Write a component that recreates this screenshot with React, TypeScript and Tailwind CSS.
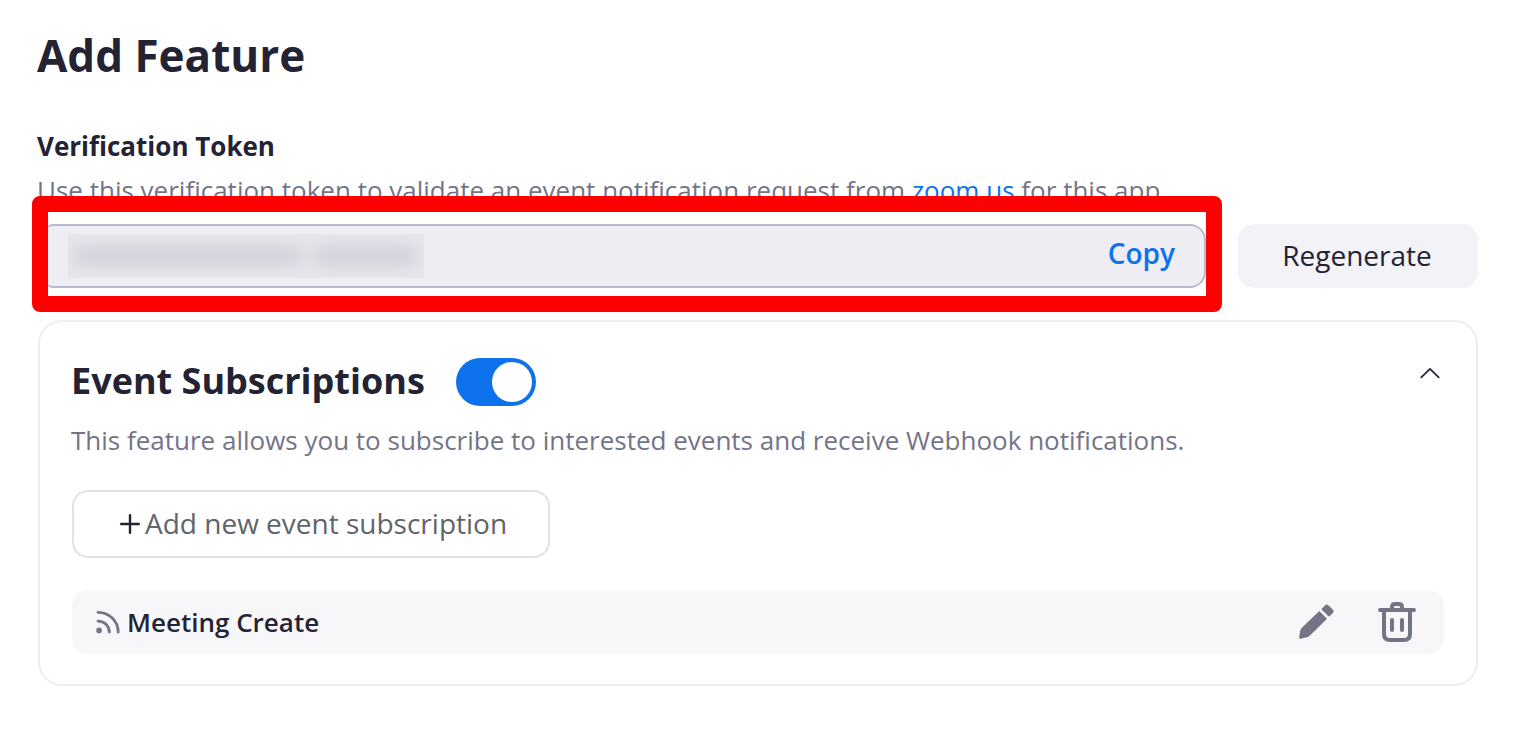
function PlusIcon() {
  return (
    <svg className="h-5 w-5 shrink-0" viewBox="0 0 20 20" fill="none" stroke="#232333" strokeWidth="2.4" strokeLinecap="round">
      <path d="M10 1.200v17.600M1.200 10h17.600" />
    </svg>
  );
}

function FeedIcon() {
  return (
    <svg className="h-6 w-6 shrink-0" viewBox="0 0 24 24" fill="none" stroke="#747487" strokeWidth="2.8" strokeLinecap="round">
      <path d="M2 2.300c11 0 20.200 8.900 20.200 19.700M2 11.100c6.400 0 11.300 4.700 11.300 10.900" />
      <circle cx="3.100" cy="20.400" r="2.800" fill="#747487" stroke="none" />
    </svg>
  );
}

function PencilIcon() {
  return (
    <svg className="h-9 w-9" viewBox="0 0 36 36" fill="#747487">
      <path d="M20.500 7.700q.8-.8 1.600 0l6.200 6.200q.8.800 0 1.600L12 31.600q-.9.900-2.100 1.300l-7.300 1.800q-1.700.2-1.500-1.500l1.300-7.100q.3-1.300 1.200-2.200Z" />
      <path d="M24.100 4.300l3.100-3.100q1.500-1.500 3.100 0l4.600 4.600q1.500 1.600 0 3.100l-3.100 3.100q-.9.800-1.700 0l-6-6q-.8-.9 0-1.700Z" />
    </svg>
  );
}

function TrashIcon() {
  return (
    <svg className="h-10 w-[38px]" viewBox="0 0 38 40" fill="none" stroke="#747487" strokeWidth="4" strokeLinecap="round">
      <path d="M2 8h34M14 7V5q0-3 3-3h4q3 0 3 3v2" />
      <path d="M6 9v23q0 6 6 6h14q6 0 6-6V9M14 18v10M24 18v10" />
    </svg>
  );
}

export default function App() {
  return (
    <main className="relative h-[746px] w-[1536px] bg-white pt-[25px] pr-[58px] pl-[38px] font-['Open_Sans',sans-serif] text-[#232333]">
      <h1 className="-ml-px h-[103px] text-[44px] leading-[60px] font-bold whitespace-nowrap">Add Feature</h1>
      <h2 className="-ml-px h-11 text-[26px] leading-9 font-bold whitespace-nowrap">Verification Token</h2>
      <p className="-ml-px h-[52px] text-[26px] leading-9 whitespace-nowrap text-[#747487]">
        Use this verification token to validate an event notification request from{" "}
        <a className="text-[#0e72ed]">zoom.us</a> for this app.
      </p>

      <div className="flex h-16 gap-8">
        <div className="flex w-[1168px] items-center justify-between rounded-2xl border-2 border-[#babacc] bg-[#ededf3] pr-[29px] pl-7">
          <div className="h-11 w-[356px] overflow-hidden bg-[#e6e7eb]">
            <div className="mt-3 ml-1.5 flex h-5 w-[342px] gap-3 blur-[8px]">
              <div className="w-[228px] bg-[#d1d1dc]" />
              <div className="flex-1 bg-[#d0d0db]" />
            </div>
          </div>
          <button className="-mt-1.5 text-[28px] leading-9 font-semibold text-[#0e72ed]">Copy</button>
        </div>
        <button className="w-60 rounded-2xl bg-[#f2f2f7] pr-0.5 pb-0.5 text-[28px] leading-9">Regenerate</button>
      </div>

      <section className="mt-8 h-[366px] rounded-3xl border-2 border-[#ededf4] pt-9 pr-8 pl-8">
        <div className="flex h-16 items-start justify-between">
          <div className="flex gap-[31px]">
            <h2 className="-mt-px -ml-px text-[36px] leading-[48px] font-bold whitespace-nowrap">Event Subscriptions</h2>
            <div className="flex h-12 w-20 items-center justify-end rounded-full bg-[#0e72ed] pr-1">
              <div className="h-10 w-10 rounded-full bg-white" />
            </div>
          </div>
          <svg className="mt-[9px] mr-1 h-3 w-5" viewBox="0 0 20 12" fill="none" stroke="#232333" strokeWidth="1.700" strokeLinecap="round" strokeLinejoin="round">
            <path d="M1.300 10.400 10 1.800 18.700 10.400" />
          </svg>
        </div>
        <p className="-ml-px h-[68px] text-[26px] leading-9 whitespace-nowrap text-[#747487]">
          This feature allows you to subscribe to interested events and receive Webhook notifications.
        </p>
        <button className="flex h-[68px] w-[478px] items-center gap-[5px] rounded-2xl border-2 border-[#dfe3e8] pl-[46px] text-[28px] whitespace-nowrap text-[#616469]">
          <PlusIcon />
          <span className="pb-0.5">Add new event subscription</span>
        </button>
        <div className="mt-8 flex h-16 items-center justify-between rounded-2xl bg-[#f7f7fa] pr-7 pl-6">
          <div className="flex items-center gap-[7px]">
            <FeedIcon />
            <span className="text-[26px] leading-9 font-semibold whitespace-nowrap">Meeting Create</span>
          </div>
          <div className="flex items-center gap-11">
            <PencilIcon />
            <TrashIcon />
          </div>
        </div>
      </section>

      <div className="pointer-events-none absolute top-[196px] left-8 h-[116px] w-[1190px] rounded-lg border-[16px] border-[#ff0000]" />
    </main>
  );
}
